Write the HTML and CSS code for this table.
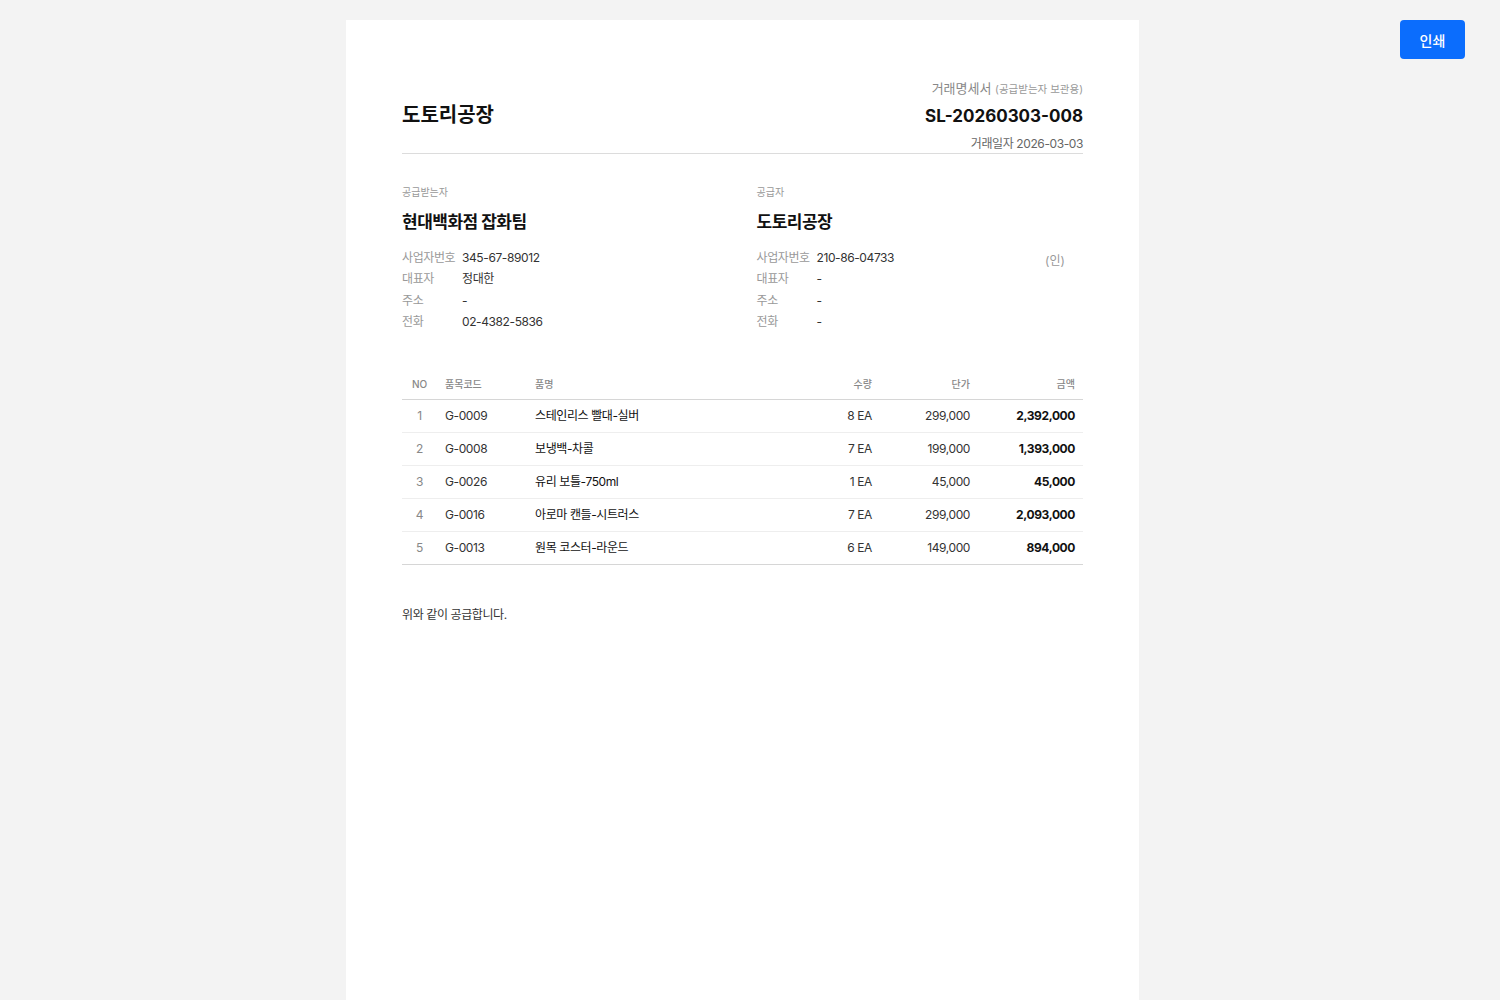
FILE: index.html
```html
<!DOCTYPE html>
<html lang="ko">
<head>
<meta charset="utf-8">
<title>거래명세서</title>
<link rel="stylesheet" href="styles.css">
</head>
<body>
<button class="print-btn">인쇄</button>
<div class="paper">
  <header class="doc-header">
    <h1 class="company">도토리공장</h1>
    <div class="doc-meta">
      <div class="doc-type">거래명세서 <span class="doc-sub">(공급받는자 보관용)</span></div>
      <div class="doc-no">SL-20260303-008</div>
      <div class="doc-date">거래일자 2026-03-03</div>
    </div>
  </header>

  <section class="parties">
    <div class="party">
      <div class="party-label">공급받는자</div>
      <div class="party-name">현대백화점 잡화팀</div>
      <div class="party-body">
        <dl class="info">
          <div class="info-row"><dt>사업자번호</dt><dd>345-67-89012</dd></div>
          <div class="info-row"><dt>대표자</dt><dd>정대한</dd></div>
          <div class="info-row"><dt>주소</dt><dd>-</dd></div>
          <div class="info-row"><dt>전화</dt><dd>02-4382-5836</dd></div>
        </dl>
      </div>
    </div>
    <div class="party">
      <div class="party-label">공급자</div>
      <div class="party-name">도토리공장</div>
      <div class="party-body">
        <dl class="info">
          <div class="info-row"><dt>사업자번호</dt><dd>210-86-04733</dd></div>
          <div class="info-row"><dt>대표자</dt><dd>-</dd></div>
          <div class="info-row"><dt>주소</dt><dd>-</dd></div>
          <div class="info-row"><dt>전화</dt><dd>-</dd></div>
        </dl>
        <div class="stamp">(인)</div>
      </div>
    </div>
  </section>

  <table class="items">
    <colgroup>
      <col class="c-no"><col class="c-code"><col class="c-name"><col class="c-qty"><col class="c-price"><col class="c-amt">
    </colgroup>
    <thead>
      <tr><th class="center">NO</th><th>품목코드</th><th>품명</th><th class="right">수량</th><th class="right">단가</th><th class="right">금액</th></tr>
    </thead>
    <tbody>
      <tr><td class="center muted">1</td><td>G-0009</td><td class="name">스테인리스 빨대-실버</td><td class="right">8 EA</td><td class="right">299,000</td><td class="right amt">2,392,000</td></tr>
      <tr><td class="center muted">2</td><td>G-0008</td><td class="name">보냉백-차콜</td><td class="right">7 EA</td><td class="right">199,000</td><td class="right amt">1,393,000</td></tr>
      <tr><td class="center muted">3</td><td>G-0026</td><td class="name">유리 보틀-750ml</td><td class="right">1 EA</td><td class="right">45,000</td><td class="right amt">45,000</td></tr>
      <tr><td class="center muted">4</td><td>G-0016</td><td class="name">아로마 캔들-시트러스</td><td class="right">7 EA</td><td class="right">299,000</td><td class="right amt">2,093,000</td></tr>
      <tr><td class="center muted">5</td><td>G-0013</td><td class="name">원목 코스터-라운드</td><td class="right">6 EA</td><td class="right">149,000</td><td class="right amt">894,000</td></tr>
    </tbody>
  </table>

  <p class="closing">위와 같이 공급합니다.</p>
</div>
</body>
</html>
```

FILE: styles.css
```css
* { box-sizing: border-box; }

html, body {
  margin: 0;
  padding: 0;
}

body {
  background: #f3f3f3;
  font-family: "Inter", "Noto Sans CJK KR", sans-serif;
  color: #333;
  padding: 20px 15px 20px 0;
}

.print-btn {
  position: fixed;
  top: 20px;
  right: 35px;
  width: 65px;
  height: 39px;
  border: 0;
  border-radius: 4px;
  background: #0b6dfd;
  color: #fff;
  font-family: "Inter", "Noto Sans CJK KR", sans-serif;
  font-size: 14px;
  font-weight: 500;
  cursor: pointer;
}

.paper {
  width: 793px;
  min-height: 1123px;
  margin: 0 auto;
  background: #fff;
  padding: 58px 56px;
}

.doc-header {
  display: flex;
  justify-content: space-between;
  align-items: center;
  padding-bottom: 1px;
  border-bottom: 1px solid #dcdcdc;
}

.company {
  margin: 0;
  font-size: 20px;
  font-weight: 700;
  color: #111;
  line-height: 28px;
}

.doc-meta {
  text-align: right;
}

.doc-type {
  font-size: 13px;
  line-height: 20px;
  color: #888;
}

.doc-sub {
  font-size: 10.5px;
  color: #999;
}

.doc-no {
  margin-top: 3px;
  font-size: 17px;
  line-height: 26px;
  font-weight: 700;
  color: #111;
}

.doc-date {
  margin-top: 7px;
  font-size: 12px;
  line-height: 16px;
  color: #666;
  letter-spacing: -0.4px;
}

.parties {
  display: grid;
  grid-template-columns: 1fr 1fr;
  column-gap: 28px;
  margin-top: 31px;
}

.party-label {
  font-size: 10px;
  line-height: 14px;
  color: #999;
}

.party-name {
  margin-top: 11px;
  font-size: 17px;
  line-height: 24px;
  font-weight: 700;
  color: #111;
  letter-spacing: -0.5px;
}

.party-body {
  display: flex;
  justify-content: space-between;
  margin-top: 13px;
}

.info {
  margin: 0;
}

.info-row {
  display: flex;
  font-size: 12px;
  line-height: 21.33px;
  letter-spacing: -0.4px;
}

.info-row dt {
  width: 60px;
  color: #999;
}

.info-row dd {
  margin: 0;
  color: #333;
}

.stamp {
  width: 56px;
  margin-top: 3px;
  height: 21px;
  line-height: 21px;
  text-align: center;
  font-size: 12px;
  color: #999;
}

.items {
  width: 100%;
  margin-top: 37px;
  border-collapse: collapse;
  font-size: 12px;
  letter-spacing: -0.4px;
}

.c-no { width: 35px; }
.c-code { width: 90px; }
.c-qty { width: 80px; }
.c-price { width: 98px; }
.c-amt { width: 105px; }

.items th {
  font-size: 10px;
  font-weight: 500;
  color: #888;
  text-align: left;
  padding: 8px 8px;
  line-height: 14px;
  border-bottom: 1px solid #d6d6d6;
  letter-spacing: 0;
}

.items td {
  height: 33px;
  padding: 0 8px;
  line-height: 16px;
  color: #333;
  border-bottom: 1px solid #eeeeee;
}

.items tbody tr:last-child td {
  border-bottom: 1px solid #d6d6d6;
}

.items .center { text-align: center; }
.items .right { text-align: right; }
.items td.muted { color: #888; }
.items td.name { color: #111; }
.items td.amt { font-weight: 700; color: #111; }

.closing {
  margin: 41px 0 0;
  font-size: 12px;
  line-height: 18px;
  color: #333;
  letter-spacing: -0.4px;
}
```
